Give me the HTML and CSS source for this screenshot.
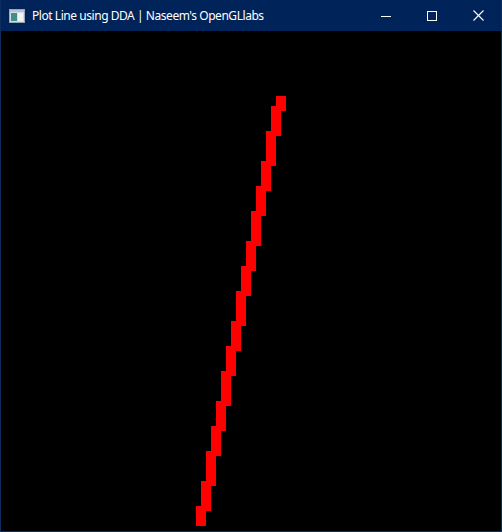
FILE: index.html
```html
<!DOCTYPE html>
<html>
<head>
<meta charset="utf-8">
<title>Plot Line using DDA</title>
<link rel="stylesheet" href="styles.css">
</head>
<body>
<div class="window">
  <div class="titlebar">
    <svg class="app-icon" width="16" height="16" viewBox="0 0 16 16">
      <rect x="0.5" y="1.5" width="15" height="13" fill="#d8dde4" stroke="#9aa6b5"/>
      <rect x="1" y="2" width="14" height="2" fill="#b9c4d2"/>
      <rect x="2" y="5" width="6" height="8" fill="#3f8f8a"/>
      <rect x="9" y="5" width="5" height="8" fill="#f2f4f6"/>
    </svg>
    <span class="title">Plot Line using DDA | Naseem's OpenGLlabs</span>
    <div class="controls">
      <div class="ctl">
        <svg width="10" height="10" viewBox="0 0 10 10"><path d="M0 5.5H10" stroke="#fff" stroke-width="1"/></svg>
      </div>
      <div class="ctl">
        <svg width="10" height="10" viewBox="0 0 10 10"><rect x="0.5" y="0.5" width="9" height="9" fill="none" stroke="#fff" stroke-width="1"/></svg>
      </div>
      <div class="ctl">
        <svg width="11" height="11" viewBox="0 0 11 11"><path d="M0.5 0.5L10.5 10.5M10.5 0.5L0.5 10.5" stroke="#fff" stroke-width="1.1"/></svg>
      </div>
    </div>
  </div>
  <div class="canvas">
    <svg width="500" height="500" viewBox="0 0 500 500" shape-rendering="crispEdges">
      <g fill="#ff0000">
        <rect x="275" y="65" width="10" height="15"/>
        <rect x="270" y="75" width="10" height="30"/>
        <rect x="265" y="100" width="10" height="35"/>
        <rect x="260" y="130" width="10" height="30"/>
        <rect x="255" y="155" width="10" height="30"/>
        <rect x="250" y="180" width="10" height="35"/>
        <rect x="245" y="210" width="10" height="30"/>
        <rect x="240" y="235" width="10" height="30"/>
        <rect x="235" y="260" width="10" height="35"/>
        <rect x="230" y="290" width="10" height="30"/>
        <rect x="225" y="315" width="10" height="30"/>
        <rect x="220" y="340" width="10" height="35"/>
        <rect x="215" y="370" width="10" height="30"/>
        <rect x="210" y="395" width="10" height="30"/>
        <rect x="205" y="420" width="10" height="35"/>
        <rect x="200" y="450" width="10" height="30"/>
        <rect x="195" y="475" width="10" height="20"/>
      </g>
    </svg>
  </div>
</div>
</body>
</html>
```
FILE: styles.css
```css
html, body {
  margin: 0;
  padding: 0;
  background: #000;
}
.window {
  width: 502px;
  height: 532px;
  box-sizing: border-box;
  border: 1px solid #0d2d60;
  border-top: none;
  background: #000;
  display: flex;
  flex-direction: column;
}
.titlebar {
  height: 31px;
  flex: none;
  background: #002459;
  display: flex;
  align-items: center;
  color: #fff;
  font-family: "Noto Sans", "Segoe UI", sans-serif;
  font-size: 12px;
  letter-spacing: -0.45px;
}
.app-icon {
  margin-left: 8px;
  margin-right: 7px;
  flex: none;
}
.title {
  white-space: nowrap;
  flex: 1;
  margin-top: -1px;
}
.controls {
  display: flex;
  height: 100%;
}
.ctl {
  width: 46px;
  height: 100%;
  display: flex;
  align-items: center;
  justify-content: center;
}
.ctl svg {
  display: block;
}
.canvas {
  width: 500px;
  height: 500px;
  flex: none;
  background: #000;
}
.canvas svg {
  display: block;
}
```
